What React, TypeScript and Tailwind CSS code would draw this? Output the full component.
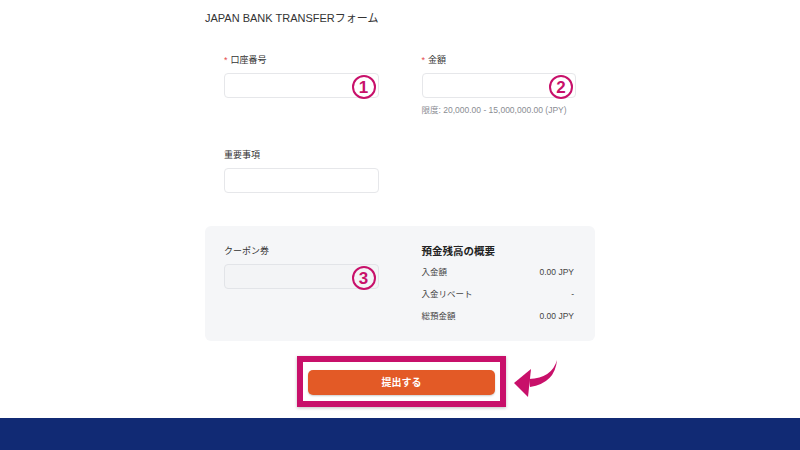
import type { ReactNode } from "react"

const font = { fontFamily: '"Liberation Sans", "Noto Sans CJK JP", sans-serif' }

function Marker({ n }: { n: string }) {
  return (
    <span className="absolute top-[1px] right-[2px] w-[24px] h-[24px] rounded-full border-[2.5px] border-[#c8106a] flex items-center justify-center text-[17px] leading-none font-bold text-[#c8106a]">
      {n}
    </span>
  )
}

function Label({ children, required }: { children: ReactNode; required?: boolean }) {
  return (
    <div className="text-[9px] leading-[12px] text-[#333] mb-[7px]">
      {required && <span className="text-[#e5484d] mr-[3px]">*</span>}
      {children}
    </div>
  )
}

function Field({ marker, muted }: { marker?: string; muted?: boolean }) {
  return (
    <div
      className={
        "relative h-[25px] rounded-[4px] border " +
        (muted ? "bg-[#f3f4f6] border-[#e2e4e8]" : "bg-white border-[#e6e7ea]")
      }
    >
      {marker && <Marker n={marker} />}
    </div>
  )
}

const summary = [
  { label: "入金額", value: "0.00 JPY" },
  { label: "入金リベート", value: "-" },
  { label: "総預金額", value: "0.00 JPY" },
]

export default function App() {
  return (
    <div className="w-[800px] h-[450px] flex flex-col bg-white overflow-hidden" style={font}>
      <main className="h-[418px] shrink-0">
        <div className="relative w-[390px] mx-auto">
          {/* Title */}
          <h1 className="pt-[10px] text-[11px] leading-[16px] text-[#333]">
            JAPAN BANK TRANSFERフォーム
          </h1>

          {/* Main fields */}
          <div className="px-[19px] mt-[28px] grid grid-cols-2 gap-x-[43px]">
            <div>
              <Label required>口座番号</Label>
              <Field marker="1" />
            </div>
            <div>
              <Label required>金額</Label>
              <Field marker="2" />
              <p className="mt-[6px] text-[8.5px] leading-[12px] text-[#8a8d93]">
                限度: 20,000.00 - 15,000,000.00 (JPY)
              </p>
            </div>
          </div>

          <div className="px-[19px] mt-[33px] w-[193px]">
            <Label>重要事項</Label>
            <Field />
          </div>

          {/* Coupon + summary */}
          <div className="mt-[33px] bg-[#f5f6f8] rounded-[6px] px-[19px] pt-[19px] pb-[14px] grid grid-cols-2 gap-x-[43px]">
            <div>
              <Label>クーポン券</Label>
              <Field marker="3" muted />
            </div>
            <div>
              <h2 className="text-[10.5px] leading-[14px] font-bold text-[#222] -mt-[1px]">
                預金残高の概要
              </h2>
              <div className="mt-[3px] pr-[2px]">
                {summary.map((row) => (
                  <div
                    key={row.label}
                    className="h-[22px] flex items-center justify-between text-[8.5px] text-[#444]"
                  >
                    <span>{row.label}</span>
                    <span>{row.value}</span>
                  </div>
                ))}
              </div>
            </div>
          </div>

          {/* Submit */}
          <div className="mt-[15px] ml-[92px] w-[209px] border-[6px] border-[#c8106a] bg-white px-[5px] pt-[7px] pb-[6px] shadow-[0_1px_3px_rgba(0,0,0,0.25)]">
            <button className="w-full h-[25px] rounded-[5px] bg-[#e35a26] text-white text-[10px] font-bold shadow-[0_1px_2px_rgba(0,0,0,0.2)]">
              提出する
            </button>
          </div>

          {/* Arrow */}
          <svg
            className="absolute left-[305px] top-[355px]"
            width="50"
            height="45"
            viewBox="0 0 50 45"
          >
            <path d="M47 5 Q42 23 19 24 L20 32 Q45 28 47 5 Z" fill="#c8106a" />
            <path d="M4 28 L21 14 L18 42 Z" fill="#c8106a" />
          </svg>
        </div>
      </main>
      <footer className="flex-1 bg-[#112a74]" />
    </div>
  )
}
